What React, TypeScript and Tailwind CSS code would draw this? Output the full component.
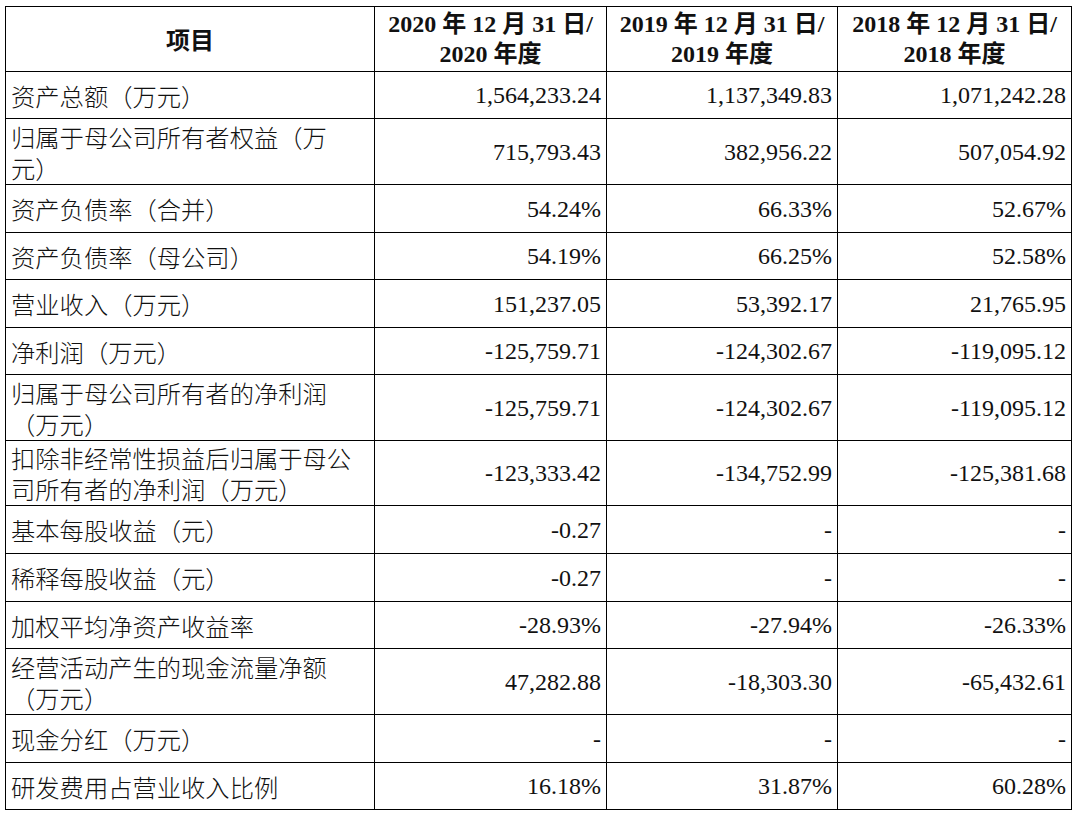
const rows = [
  { label: "资产总额（万元）", h: "h-[47px]", v: ["1,564,233.24", "1,137,349.83", "1,071,242.28"] },
  { label: "归属于母公司所有者权益（万元）", h: "h-[66px]", v: ["715,793.43", "382,956.22", "507,054.92"] },
  { label: "资产负债率（合并）", h: "h-[48px]", v: ["54.24%", "66.33%", "52.67%"] },
  { label: "资产负债率（母公司）", h: "h-[47px]", v: ["54.19%", "66.25%", "52.58%"] },
  { label: "营业收入（万元）", h: "h-[48px]", v: ["151,237.05", "53,392.17", "21,765.95"] },
  { label: "净利润（万元）", h: "h-[47px]", v: ["-125,759.71", "-124,302.67", "-119,095.12"] },
  { label: "归属于母公司所有者的净利润（万元）", h: "h-[66px]", v: ["-125,759.71", "-124,302.67", "-119,095.12"] },
  { label: "扣除非经常性损益后归属于母公司所有者的净利润（万元）", h: "h-[65px]", v: ["-123,333.42", "-134,752.99", "-125,381.68"] },
  { label: "基本每股收益（元）", h: "h-[48px]", v: ["-0.27", "-", "-"] },
  { label: "稀释每股收益（元）", h: "h-[48px]", v: ["-0.27", "-", "-"] },
  { label: "加权平均净资产收益率", h: "h-[47px]", v: ["-28.93%", "-27.94%", "-26.33%"] },
  { label: "经营活动产生的现金流量净额（万元）", h: "h-[66px]", v: ["47,282.88", "-18,303.30", "-65,432.61"] },
  { label: "现金分红（万元）", h: "h-[48px]", v: ["-", "-", "-"] },
  { label: "研发费用占营业收入比例", h: "h-[47px]", v: ["16.18%", "31.87%", "60.28%"] },
];

const years = ["2020", "2019", "2018"];

export default function App() {
  return (
    <div className="w-[1080px] h-[816px] bg-white pt-[6px] pl-[5px]">
      <table className="table-fixed border-collapse w-[1066px] text-[24px] text-[#111]">
        <colgroup>
          <col className="w-[369px]" />
          <col className="w-[232px]" />
          <col className="w-[231px]" />
          <col className="w-[234px]" />
        </colgroup>
        <thead>
          <tr className="h-[65px]">
            <th className="border-[1.5px] border-black text-center align-middle font-bold leading-[30px] font-['Noto_Sans_CJK_SC',sans-serif]">
              项目
            </th>
            {years.map(y => (
              <th
                key={y}
                className="border-[1.5px] border-black text-center align-middle font-bold leading-[30px] font-['Liberation_Serif','Noto_Sans_CJK_SC',serif]"
              >
                {y} 年 12 月 31 日/
                <br />
                {y} 年度
              </th>
            ))}
          </tr>
        </thead>
        <tbody>
          {rows.map(r => (
            <tr key={r.label} className={r.h}>
              <td className="border-[1.5px] border-black pl-[5px] pr-[12px] align-middle text-[24.3px] leading-[31px] font-light [text-spacing-trim:space-all] font-['Noto_Sans_CJK_SC',sans-serif]">
                {r.label}
              </td>
              {r.v.map((val, i) => (
                <td
                  key={i}
                  className="border-[1.5px] border-black pr-[5px] text-right align-middle leading-[30px] font-['Liberation_Serif',serif]"
                >
                  {val}
                </td>
              ))}
            </tr>
          ))}
        </tbody>
      </table>
    </div>
  );
}
